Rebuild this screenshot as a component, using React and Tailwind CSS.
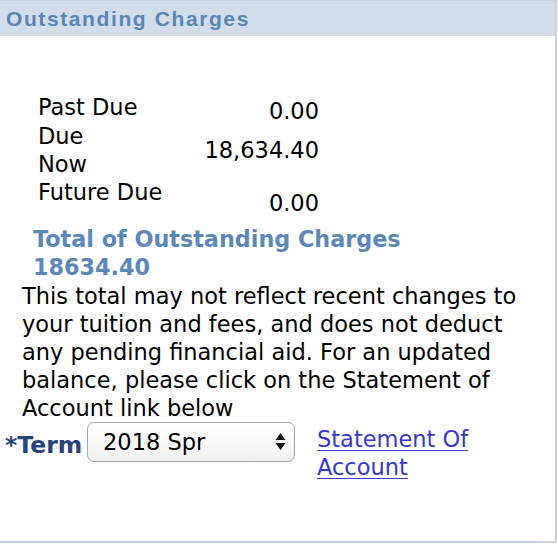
import React from 'react';

const rows = [
  { label: <>Past Due</>, value: '0.00', rowH: 'h-[29px]', valuePad: 'pt-[4px]' },
  { label: <>Due<br />Now</>, value: '18,634.40', rowH: 'h-[56px]', valuePad: 'pt-[14px]' },
  { label: <>Future Due</>, value: '0.00', rowH: 'h-[39px]', valuePad: 'pt-[11px]' },
];

function SelectArrows() {
  return (
    <svg width="11" height="19" viewBox="0 0 11 19" className="pointer-events-none absolute right-[9px] top-[10px]">
      <path d="M5.5 1 L10.5 8 L0.5 8 Z" fill="#111" />
      <path d="M5.5 18 L10.5 11 L0.5 11 Z" fill="#111" />
    </svg>
  );
}

export default function App() {
  return (
    <div className="w-[558px] h-[544px] bg-white">
      <div className="w-[557px] h-[543px] border-t border-r-2 border-b-2 border-[#c9d0e1] flex flex-col" style={{ fontFamily: '"DejaVu Sans", Verdana, sans-serif' }}>
        {/* header */}
        <div className="h-[35px] bg-[#d3dde9] pl-[6px] flex items-center">
          <h1 className="text-[21px] font-bold tracking-[1.6px] text-[#5a86b6] leading-none" style={{ fontFamily: '"Liberation Sans", Arial, sans-serif' }}>
            Outstanding Charges
          </h1>
        </div>

        {/* balances */}
        <div className="mt-[57px] pl-[38px] text-[22.5px] leading-[28px] text-black">
          {rows.map((r, i) => (
            <div key={i} className={`flex items-start ${r.rowH}`}>
              <div className="w-[140px] whitespace-nowrap">{r.label}</div>
              <div className={`w-[141px] text-right ${r.valuePad}`}>{r.value}</div>
            </div>
          ))}
        </div>

        <div className="mt-[8px] pl-[33px] text-[22.3px] leading-[28px] font-bold text-[#5b88b9]">
          <div>Total of Outstanding Charges</div>
          <div>18634.40</div>
        </div>

        <p className="mt-[1px] ml-[22px] w-[515px] text-[22.5px] leading-[28px] text-black">
          This total may not reflect recent changes to your tuition and fees, and does not deduct any pending financial aid. For an updated balance, please click on the Statement of Account link below
        </p>

        {/* term selector */}
        <div className="flex items-start pl-[5px] text-[22.5px] leading-[28px]">
          <label className="w-[82px] pt-[9px] text-[23.5px] font-bold text-[#26447a] whitespace-nowrap">*Term</label>
          <div className="relative w-[208px] h-[40px]">
            <select
              defaultValue="2018 Spr"
              className="appearance-none w-full h-full rounded-[7px] border border-[#a7a7a7] bg-gradient-to-b from-white to-[#f1f1f1] pl-[15px] text-[22.5px] text-black outline-none"
              style={{ fontFamily: '"DejaVu Sans", Verdana, sans-serif' }}
            >
              <option>2018 Spr</option>
              <option>2017 Fall</option>
              <option>2017 Sum</option>
            </select>
            <SelectArrows />
          </div>
          <a href="#" className="ml-[22px] pt-[3px] text-[#3838cc] underline underline-offset-[3px] decoration-1">
            Statement Of<br />Account
          </a>
        </div>
      </div>
    </div>
  );
}
